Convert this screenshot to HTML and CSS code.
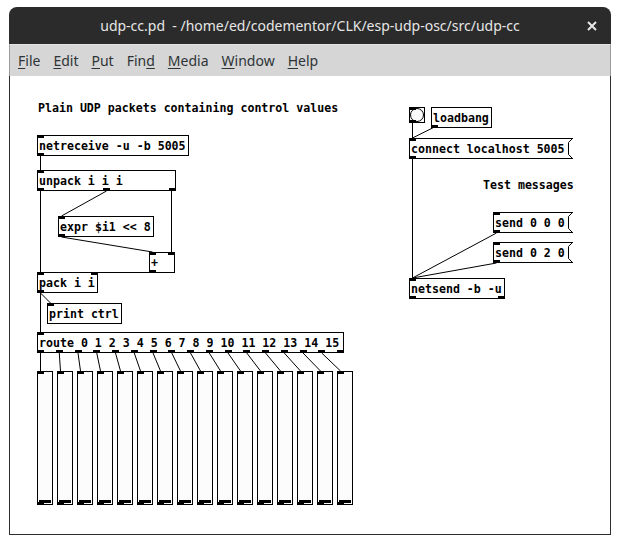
FILE: index.html
```html
<!DOCTYPE html>
<html>
<head>
<meta charset="utf-8">
<link rel="stylesheet" href="styles.css">
</head>
<body>
<div class="window">
  <div class="titlebar">
    <span class="title">udp-cc.pd  - /home/ed/codementor/CLK/esp-udp-osc/src/udp-cc</span>
    <svg class="close" width="10" height="10" viewBox="0 0 10 10"><path d="M1 1 L9 9 M9 1 L1 9"/></svg>
  </div>
  <div class="menubar">
    <span><u>F</u>ile</span>
    <span><u>E</u>dit</span>
    <span><u>P</u>ut</span>
    <span>Fin<u>d</u></span>
    <span><u>M</u>edia</span>
    <span><u>W</u>indow</span>
    <span><u>H</u>elp</span>
  </div>
  <div class="canvas">
    <svg class="wires" width="600" height="458" viewBox="10 76 600 458">
      <line x1="40.5" y1="156" x2="40.5" y2="170"/>
      <line x1="40.5" y1="191" x2="40.5" y2="272"/>
      <line x1="106.5" y1="191" x2="61.5" y2="216"/>
      <line x1="171.5" y1="191" x2="171.5" y2="252"/>
      <line x1="61.5" y1="237" x2="152.5" y2="252"/>
      <line x1="152.5" y1="272.5" x2="94.5" y2="272.5"/>
      <line x1="40.5" y1="293" x2="50.5" y2="303"/>
      <line x1="40.5" y1="293" x2="40.5" y2="332"/>
      <line x1="40.5" y1="353" x2="40.5" y2="371"/>
      <line x1="59.25" y1="353" x2="60.5" y2="371"/>
      <line x1="78" y1="353" x2="80.5" y2="371"/>
      <line x1="96.75" y1="353" x2="100.5" y2="371"/>
      <line x1="115.5" y1="353" x2="120.5" y2="371"/>
      <line x1="134.25" y1="353" x2="140.5" y2="371"/>
      <line x1="153" y1="353" x2="160.5" y2="371"/>
      <line x1="171.75" y1="353" x2="180.5" y2="371"/>
      <line x1="190.5" y1="353" x2="200.5" y2="371"/>
      <line x1="209.25" y1="353" x2="220.5" y2="371"/>
      <line x1="228" y1="353" x2="240.5" y2="371"/>
      <line x1="246.75" y1="353" x2="260.5" y2="371"/>
      <line x1="265.5" y1="353" x2="280.5" y2="371"/>
      <line x1="284.25" y1="353" x2="300.5" y2="371"/>
      <line x1="303" y1="353" x2="320.5" y2="371"/>
      <line x1="321.75" y1="353" x2="340.5" y2="371"/>
      <line x1="412.5" y1="123" x2="412.5" y2="138"/>
      <line x1="434.5" y1="127" x2="412.5" y2="138"/>
      <line x1="412.5" y1="159" x2="412.5" y2="278"/>
      <line x1="496.5" y1="233" x2="412.5" y2="278"/>
      <line x1="496.5" y1="263" x2="412.5" y2="278"/>
    </svg>

    <div class="node comment c-title">Plain UDP packets containing control values</div>
    <div class="node comment c-test">Test messages</div>

    <div class="node o-netreceive">netreceive -u -b 5005<div class="ports top"><i></i></div><div class="ports bot"><i></i></div></div>
    <div class="node o-unpack">unpack i i i<div class="ports top"><i></i></div><div class="ports bot"><i></i><i></i><i></i></div></div>
    <div class="node o-expr">expr $i1 &lt;&lt; 8<div class="ports top"><i></i></div><div class="ports bot"><i></i></div></div>
    <div class="node o-plus">+<div class="ports top"><i></i><i></i></div><div class="ports bot"><i></i></div></div>
    <div class="node o-pack">pack i i<div class="ports top"><i></i><i></i></div><div class="ports bot"><i></i></div></div>
    <div class="node o-print">print ctrl<div class="ports top"><i></i></div></div>
    <div class="node o-route">route 0 1 2 3 4 5 6 7 8 9 10 11 12 13 14 15<div class="ports top"><i></i></div><div class="ports bot"><i></i><i></i><i></i><i></i><i></i><i></i><i></i><i></i><i></i><i></i><i></i><i></i><i></i><i></i><i></i><i></i><i></i></div></div>

    <div class="sliders">
      <div class="vsl"><div class="ports top"><i></i></div><div class="knob"></div><div class="ports bot"><i></i></div></div>
      <div class="vsl"><div class="ports top"><i></i></div><div class="knob"></div><div class="ports bot"><i></i></div></div>
      <div class="vsl"><div class="ports top"><i></i></div><div class="knob"></div><div class="ports bot"><i></i></div></div>
      <div class="vsl"><div class="ports top"><i></i></div><div class="knob"></div><div class="ports bot"><i></i></div></div>
      <div class="vsl"><div class="ports top"><i></i></div><div class="knob"></div><div class="ports bot"><i></i></div></div>
      <div class="vsl"><div class="ports top"><i></i></div><div class="knob"></div><div class="ports bot"><i></i></div></div>
      <div class="vsl"><div class="ports top"><i></i></div><div class="knob"></div><div class="ports bot"><i></i></div></div>
      <div class="vsl"><div class="ports top"><i></i></div><div class="knob"></div><div class="ports bot"><i></i></div></div>
      <div class="vsl"><div class="ports top"><i></i></div><div class="knob"></div><div class="ports bot"><i></i></div></div>
      <div class="vsl"><div class="ports top"><i></i></div><div class="knob"></div><div class="ports bot"><i></i></div></div>
      <div class="vsl"><div class="ports top"><i></i></div><div class="knob"></div><div class="ports bot"><i></i></div></div>
      <div class="vsl"><div class="ports top"><i></i></div><div class="knob"></div><div class="ports bot"><i></i></div></div>
      <div class="vsl"><div class="ports top"><i></i></div><div class="knob"></div><div class="ports bot"><i></i></div></div>
      <div class="vsl"><div class="ports top"><i></i></div><div class="knob"></div><div class="ports bot"><i></i></div></div>
      <div class="vsl"><div class="ports top"><i></i></div><div class="knob"></div><div class="ports bot"><i></i></div></div>
      <div class="vsl"><div class="ports top"><i></i></div><div class="knob"></div><div class="ports bot"><i></i></div></div>
    </div>

    <div class="bng"><div class="ports top"><i></i></div><div class="disc"></div><div class="ports bot"><i></i></div></div>
    <div class="node o-loadbang">loadbang<div class="ports bot"><i></i></div></div>
    <div class="node msg m-connect">connect localhost 5005<svg class="flag" width="5" height="21" viewBox="0 0 5 21"><polyline points="4.5,0.5 0.5,4.5 0.5,16.5 4.5,20.5"/></svg><div class="ports top"><i></i></div><div class="ports bot"><i></i></div></div>
    <div class="node msg m-send1">send 0 0 0<svg class="flag" width="5" height="21" viewBox="0 0 5 21"><polyline points="4.5,0.5 0.5,4.5 0.5,16.5 4.5,20.5"/></svg><div class="ports top"><i></i></div><div class="ports bot"><i></i></div></div>
    <div class="node msg m-send2">send 0 2 0<svg class="flag" width="5" height="21" viewBox="0 0 5 21"><polyline points="4.5,0.5 0.5,4.5 0.5,16.5 4.5,20.5"/></svg><div class="ports top"><i></i></div><div class="ports bot"><i></i></div></div>
    <div class="node o-netsend">netsend -b -u<div class="ports top"><i></i></div><div class="ports bot"><i></i><i></i></div></div>
  </div>
</div>
</body>
</html>
```
FILE: styles.css
```css
html, body {
  margin: 0;
  padding: 0;
  background: #ffffff;
}

.window {
  margin: 7px 0 0 9px;
  width: 602px;
  height: 528px;
  display: flex;
  flex-direction: column;
  border-radius: 8px 8px 0 0;
  overflow: hidden;
}

.titlebar {
  height: 37px;
  flex: none;
  background: #2b2b2b;
  display: flex;
  align-items: center;
  position: relative;
}

.title {
  flex: 1;
  text-align: center;
  padding-left: 0;
  padding-right: 0;
  white-space: pre;
  color: #e6e6e6;
  font-family: "Noto Sans", sans-serif;
  font-size: 14px;
}

.close {
  position: absolute;
  right: 14px;
  top: 14px;
  stroke: #e8e8e8;
  stroke-width: 2;
  fill: none;
}

.menubar {
  height: 32px;
  flex: none;
  box-sizing: border-box;
  background: #d6d6d6;
  border-top: 1px solid #e4e4e4;
  border-left: 1px solid #9a9a9a;
  border-right: 1px solid #9a9a9a;
  display: flex;
  align-items: center;
  gap: 13px;
  padding-left: 8px;
  color: #2e3436;
  font-family: "Noto Sans", sans-serif;
  font-size: 14px;
}

.menubar u {
  text-decoration-thickness: 1px;
  text-underline-offset: 2px;
}

.canvas {
  flex: 1;
  position: relative;
  background: #ffffff;
  border: 1px solid #2e2e2e;
  border-top: none;
}

.wires {
  position: absolute;
  left: 0;
  top: 0;
  stroke: #000;
  stroke-width: 1;
  fill: none;
}

.node {
  position: absolute;
  box-sizing: border-box;
  height: 21px;
  border: 1px solid #000;
  background: #ffffff;
  padding: 2px 2px 0 1px;
  color: #000;
  font-family: "DejaVu Sans Mono", monospace;
  font-weight: bold;
  font-size: 11.6px;
  line-height: 16px;
  white-space: pre;
}

.comment {
  border-color: transparent;
  background: transparent;
}

.ports {
  position: absolute;
  left: -1px;
  right: -1px;
  height: 3px;
  display: flex;
  justify-content: space-between;
}

.ports.top { top: -1px; }
.ports.bot { bottom: -1px; }

.ports i {
  display: block;
  width: 7px;
  height: 3px;
  background: #000;
}

.msg {
  border-right: none;
}

.flag {
  position: absolute;
  right: 0;
  top: -1px;
  stroke: #000;
  stroke-width: 1;
  fill: none;
}

.msg .ports { right: 4px; }

.c-title { left: 26px; top: 21px; }
.c-test { left: 471px; top: 98px; }

.o-netreceive { left: 27px; top: 59px; width: 152px; }
.o-unpack { left: 27px; top: 94px; width: 139px; }
.o-expr { left: 48px; top: 140px; width: 96px; }
.o-plus { left: 139px; top: 176px; width: 26px; }
.o-pack { left: 27px; top: 196px; width: 61px; }
.o-print { left: 37px; top: 227px; width: 75px; }
.o-route { left: 27px; top: 256px; width: 307px; }

.o-loadbang { left: 421px; top: 31px; width: 61px; }
.m-connect { left: 399px; top: 62px; width: 164px; }
.m-send1 { left: 483px; top: 136px; width: 80px; }
.m-send2 { left: 483px; top: 166px; width: 80px; }
.o-netsend { left: 399px; top: 202px; width: 96px; }

.sliders {
  position: absolute;
  left: 27px;
  top: 295px;
  display: flex;
  gap: 4px;
}

.vsl {
  position: relative;
  box-sizing: border-box;
  width: 16px;
  height: 134px;
  border: 1px solid #000;
  background: #fcfcfc;
}

.knob {
  position: absolute;
  left: 1px;
  right: 1px;
  bottom: 1px;
  height: 3px;
  background: #000;
}

.bng {
  position: absolute;
  left: 399px;
  top: 31px;
  box-sizing: border-box;
  width: 16px;
  height: 16px;
  border: 1px solid #000;
  background: #fcfcfc;
  display: flex;
  align-items: center;
  justify-content: center;
}

.disc {
  box-sizing: border-box;
  width: 14px;
  height: 14px;
  border: 1px solid #000;
  border-radius: 50%;
  background: #fcfcfc;
}
```
